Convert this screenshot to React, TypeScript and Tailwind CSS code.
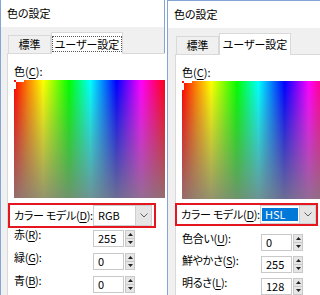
import React from 'react';

type Row = { label: string; key: string; value: string };

interface PanelProps {
  width: string;
  model: string;
  selected: boolean;
  focusTab: boolean;
  rows: Row[];
  leftGap: string;
  edge: string;
  topEdge: string;
  boxClass: string;
  combo: string;
  labelCol: string;
  rowsTop: string;
  rowGap: string;
}

const font = "font-['Noto_Sans_CJK_JP',sans-serif] [font-feature-settings:'palt']";

function Mnemonic({ label, k }: { label: string; k: string }) {
  return (
    <span className="whitespace-nowrap">
      {label}(<span className="underline underline-offset-2">{k}</span>):
    </span>
  );
}

function SpinBox({ value }: { value: string }) {
  return (
    <div className="flex gap-[1px]">
      <div className="w-[31px] h-[17px] border border-[#c9c9c9] bg-white pl-[4px] text-[11px] leading-[15px]">
        {value}
      </div>
      <div className="w-[10px] h-[17px] border border-[#c9c9c9] bg-[#e6e6e6] flex flex-col">
        <div className="flex-1 flex items-center justify-center border-b border-[#c9c9c9]">
          <svg width="5" height="3" viewBox="0 0 5 3">
            <path d="M2.5 0L5 3H0z" fill="#222" />
          </svg>
        </div>
        <div className="flex-1 flex items-center justify-center">
          <svg width="5" height="3" viewBox="0 0 5 3">
            <path d="M0 0h5L2.5 3z" fill="#222" />
          </svg>
        </div>
      </div>
    </div>
  );
}

function Spectrum() {
  return (
    <div className="relative h-[118px] w-[153px] shrink-0 bg-[linear-gradient(to_right,#ff0000,#ff8000_9%,#ffff00_19%,#00ff00_36%,#00ffff_50%,#0000ff_67%,#ff00ff_83%,#ff0000)]">
      <div className="absolute inset-0 bg-[linear-gradient(to_bottom,rgba(128,128,128,0),rgba(128,128,128,0.84))]" />
      {/* crosshair marker, mostly off the top-left corner */}
      <svg className="absolute left-0 top-0" width="10" height="9" viewBox="0 0 10 9">
        <rect x="2" y="0" width="8" height="2" fill="#fff" />
        <rect x="0" y="2" width="2" height="7" fill="#fff" />
      </svg>
    </div>
  );
}

function Panel(p: PanelProps) {
  return (
    <div className={`${p.width} h-[295px] shrink-0 flex flex-col bg-[#f0f0f0] border-l border-[#86a3d6] overflow-hidden ${p.edge}`}>
      <div className={`h-[27px] shrink-0 bg-white pl-[6px] flex items-center text-[11px] ${p.topEdge}`}>色の設定</div>
      <div className={`flex-1 flex flex-col ${p.leftGap}`}>
        <div className={`h-[26px] shrink-0 flex items-end pl-[1px] text-[11px] ${p.topEdge}`}>
          <div className="w-[43px] h-[18px] border border-b-0 border-[#d9d9d9] flex items-center justify-center">
            標準
          </div>
          <div className="relative z-10 -mb-[1px] w-[72px] h-[22px] bg-white border border-b-0 border-[#d9d9d9] flex items-center justify-center whitespace-nowrap">
            <span className={focusClass(p.focusTab)}>ユーザー設定</span>
          </div>
        </div>
        <div className="flex-1 bg-white border-l border-t border-[#d9d9d9] text-[11px]">
          <div className="pl-[6px] pt-[9px] h-[26px] leading-[16px]">
            <Mnemonic label="色" k="C" />
          </div>
          <div className="pl-[6px]">
            <Spectrum />
          </div>
          <div className={`${p.boxClass} border-2 border-[#e5161f] flex items-center pl-[4px]`}>
            <div className={`${p.labelCol} shrink-0 tracking-[-0.3px]`}>
              <Mnemonic label="カラー モデル" k="D" />
            </div>
            <div className={`${p.combo} border border-[#cfcfcf] bg-white flex items-center`}>
              <div className="flex-1 pl-[1px]">
                <span
                  className={
                    p.selected
                      ? 'block w-[36px] h-[13px] bg-[#0078d7] text-white pl-[3px] leading-[13px]'
                      : 'block pl-[3px] leading-[13px]'
                  }
                >
                  {p.model}
                </span>
              </div>
              <div className="w-[16px] h-full bg-[#e5e5e5] border-l border-[#cfcfcf] flex items-center justify-center">
                <svg width="8" height="5" viewBox="0 0 8 5">
                  <path d="M0.5 0.5L4 4L7.5 0.5" stroke="#606060" strokeWidth="1" fill="none" />
                </svg>
              </div>
            </div>
          </div>
          <div className={`${p.rowsTop} flex flex-col ${p.rowGap} pl-[6px]`}>
            {p.rows.map((r) => (
              <div key={r.key} className="flex items-start">
                <div className={`${p.labelCol} -mt-[3px] leading-[14px] tracking-[-0.3px]`}>
                  <Mnemonic label={r.label} k={r.key} />
                </div>
                <SpinBox value={r.value} />
              </div>
            ))}
          </div>
        </div>
      </div>
    </div>
  );
}

function focusClass(focus: boolean) {
  return focus ? 'px-[2px] border border-dotted border-[#555] leading-[12px] py-[1px]' : 'px-[3px]';
}

export default function App() {
  return (
    <div className={`w-[320px] h-[295px] flex bg-white text-black ${font}`}>
      <Panel
        width="w-[165px]"
        model="RGB"
        selected={false}
        focusTab
        leftGap="pl-[6px]"
        edge=""
        topEdge="border-r border-[#86a3d6]"
        boxClass="mt-[5px] w-[148px] h-[25px]"
        combo="w-[59px] h-[21px]"
        labelCol="w-[79px]"
        rowsTop="mt-[2px]"
        rowGap="gap-[6px]"
        rows={[
          { label: '赤', key: 'R', value: '255' },
          { label: '緑', key: 'G', value: '0' },
          { label: '青', key: 'B', value: '0' },
        ]}
      />
      <div className="w-[2px] shrink-0 bg-white" />
      <Panel
        width="w-[153px]"
        model="HSL"
        selected
        focusTab={false}
        leftGap="pl-[7px]"
        edge="border-t"
        topEdge=""
        boxClass="mt-[4px] -ml-[1px] w-[143px] h-[23px]"
        combo="w-[56px] h-[19px]"
        labelCol="w-[79px]"
        rowsTop="mt-[8px]"
        rowGap="gap-[5px]"
        rows={[
          { label: '色合い', key: 'U', value: '0' },
          { label: '鮮やかさ', key: 'S', value: '255' },
          { label: '明るさ', key: 'L', value: '128' },
        ]}
      />
    </div>
  );
}
